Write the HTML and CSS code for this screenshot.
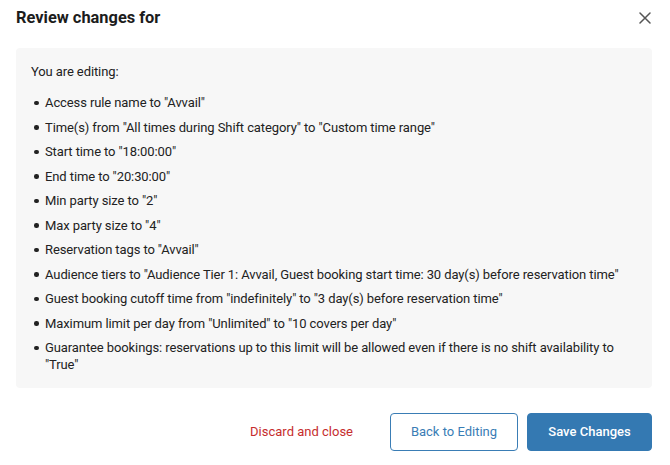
FILE: index.html
```html
<!DOCTYPE html>
<html>
<head>
<meta charset="utf-8">
<link rel="stylesheet" href="styles.css">
</head>
<body>
<div class="dialog">
  <div class="header">
    <h1 class="title">Review changes for</h1>
    <button class="close" aria-label="Close">
      <svg width="12" height="12" viewBox="0 0 12 12"><path d="M1 1L11 11M11 1L1 11" stroke="#555" stroke-width="1.5" stroke-linecap="round"/></svg>
    </button>
  </div>
  <div class="box">
    <p class="intro">You are editing:</p>
    <ul class="changes">
      <li>Access rule name to "Avvail"</li>
      <li>Time(s) from "All times during Shift category" to "Custom time range"</li>
      <li>Start time to "18:00:00"</li>
      <li>End time to "20:30:00"</li>
      <li>Min party size to "2"</li>
      <li>Max party size to "4"</li>
      <li>Reservation tags to "Avvail"</li>
      <li>Audience tiers to "Audience Tier 1: Avvail, Guest booking start time: 30 day(s) before reservation time"</li>
      <li>Guest booking cutoff time from "indefinitely" to "3 day(s) before reservation time"</li>
      <li>Maximum limit per day from "Unlimited" to "10 covers per day"</li>
      <li>Guarantee bookings: reservations up to this limit will be allowed even if there is no shift availability to "True"</li>
    </ul>
  </div>
  <div class="actions">
    <button class="btn-link">Discard and close</button>
    <button class="btn-outline">Back to Editing</button>
    <button class="btn-primary">Save Changes</button>
  </div>
</div>
</body>
</html>
```
FILE: styles.css
```css
* { box-sizing: border-box; }
html, body { margin: 0; padding: 0; background: #fff; }
body {
  font-family: Roboto, "Liberation Sans", sans-serif;
  color: #222;
  width: 670px;
  height: 465px;
  overflow: hidden;
}
.dialog {
  padding: 6px 18px 0 16px;
}
.header {
  display: flex;
  align-items: center;
  justify-content: space-between;
  height: 24px;
  margin-bottom: 18px;
}
.title {
  margin: 0;
  font-size: 16.4px;
  font-weight: 700;
  line-height: 24px;
  color: #1c1c1c;
}
.close {
  border: 0;
  background: none;
  padding: 0;
  margin-right: 1px;
  width: 12px;
  height: 12px;
  display: flex;
  cursor: pointer;
}
.box {
  background: #f7f7f7;
  border-radius: 4px;
  padding: 15px 15px 7px 15px;
  font-size: 13px;
  letter-spacing: -0.1px;
  line-height: 17px;
}
.intro {
  margin: 0 0 14px 0;
}
.changes {
  list-style: none;
  margin: 0;
  padding: 0;
}
.changes li {
  display: flex;
  margin-bottom: 7.5px;
}
.changes li::before {
  content: "";
  flex: none;
  width: 4.5px;
  height: 4.5px;
  border-radius: 50%;
  background: #222;
  margin: 6.5px 6.5px 0 3px;
}
.actions {
  display: flex;
  justify-content: flex-end;
  align-items: center;
  gap: 9px;
  margin-top: 25px;
}
.actions button {
  font-family: Roboto, "Liberation Sans", sans-serif;
  font-size: 13px;
  height: 38px;
  border-radius: 4px;
  cursor: pointer;
}
.btn-link {
  background: none;
  border: 0;
  color: #c62d2d;
  padding: 0 16px;
  margin-right: 12px;
}
.btn-outline {
  background: #fff;
  border: 1px solid #3a7db5;
  color: #3a7db5;
  width: 128px;
}
.btn-primary {
  background: #3479b2;
  border: 1px solid #3479b2;
  color: #fff;
  font-weight: 500;
  width: 125px;
}
```
